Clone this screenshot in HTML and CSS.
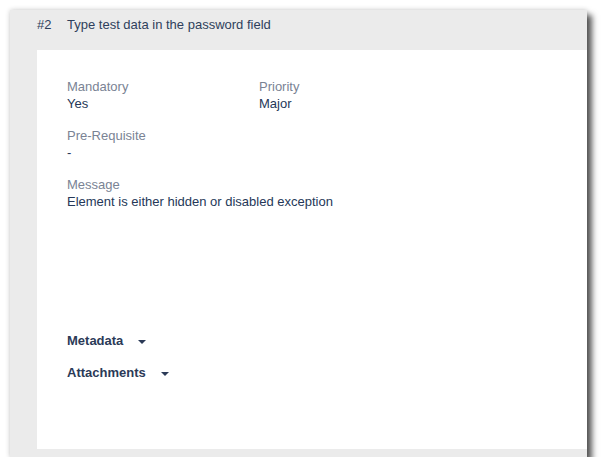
FILE: index.html
```html
<!DOCTYPE html>
<html>
<head>
<meta charset="utf-8">
<link rel="stylesheet" href="styles.css">
</head>
<body>
<div class="window">
  <div class="header">
    <span class="num">#2</span>
    <span class="title">Type test data in the password field</span>
  </div>
  <div class="body">
    <div class="panel">
      <div class="row">
        <div class="field">
          <div class="label">Mandatory</div>
          <div class="value">Yes</div>
        </div>
        <div class="field">
          <div class="label">Priority</div>
          <div class="value">Major</div>
        </div>
      </div>
      <div class="field">
        <div class="label">Pre-Requisite</div>
        <div class="value">-</div>
      </div>
      <div class="field">
        <div class="label">Message</div>
        <div class="value">Element is either hidden or disabled exception</div>
      </div>
      <div class="toggles">
        <div class="toggle">Metadata <span class="caret"></span></div>
        <div class="toggle">Attachments <span class="caret"></span></div>
      </div>
    </div>
  </div>
</div>
</body>
</html>
```

FILE: styles.css
```css
html, body {
  margin: 0;
  padding: 0;
  background: #ffffff;
}
body {
  font-family: "Liberation Sans", Arial, sans-serif;
  font-size: 13px;
  padding: 10px 0 0 10px;
}
.window {
  width: 577px;
  height: 447px;
  background: #ebebeb;
  box-shadow: 5px 5px 6px rgba(0, 0, 0, 0.65), 0 0 5px rgba(0, 0, 0, 0.2);
  display: flex;
  flex-direction: column;
  box-sizing: border-box;
}
.header {
  height: 40px;
  box-sizing: border-box;
  padding: 6px 0 0 27px;
  line-height: 18px;
  color: #2f3f5c;
  display: flex;
}
.num {
  width: 30px;
}
.body {
  flex: 1;
  padding: 0 0 8px 27px;
  display: flex;
}
.panel {
  flex: 1;
  background: #ffffff;
  padding: 28px 0 0 30px;
  box-sizing: border-box;
}
.row {
  display: grid;
  grid-template-columns: 192px 1fr;
}
.field {
  margin-bottom: 15px;
}
.label {
  line-height: 17px;
  color: #7a8394;
}
.value {
  padding-top: 1px;
  line-height: 16px;
  color: #253858;
}
.toggles {
  margin-top: 123px;
  display: flex;
  flex-direction: column;
  gap: 16px;
}
.toggle {
  font-weight: bold;
  line-height: 16px;
  color: #2b3a57;
  display: flex;
  align-items: center;
}
.caret {
  width: 0;
  height: 0;
  margin-left: 15px;
  border-left: 4px solid transparent;
  border-right: 4px solid transparent;
  border-top: 4px solid #2b3a57;
  margin-top: 1px;
}
```
